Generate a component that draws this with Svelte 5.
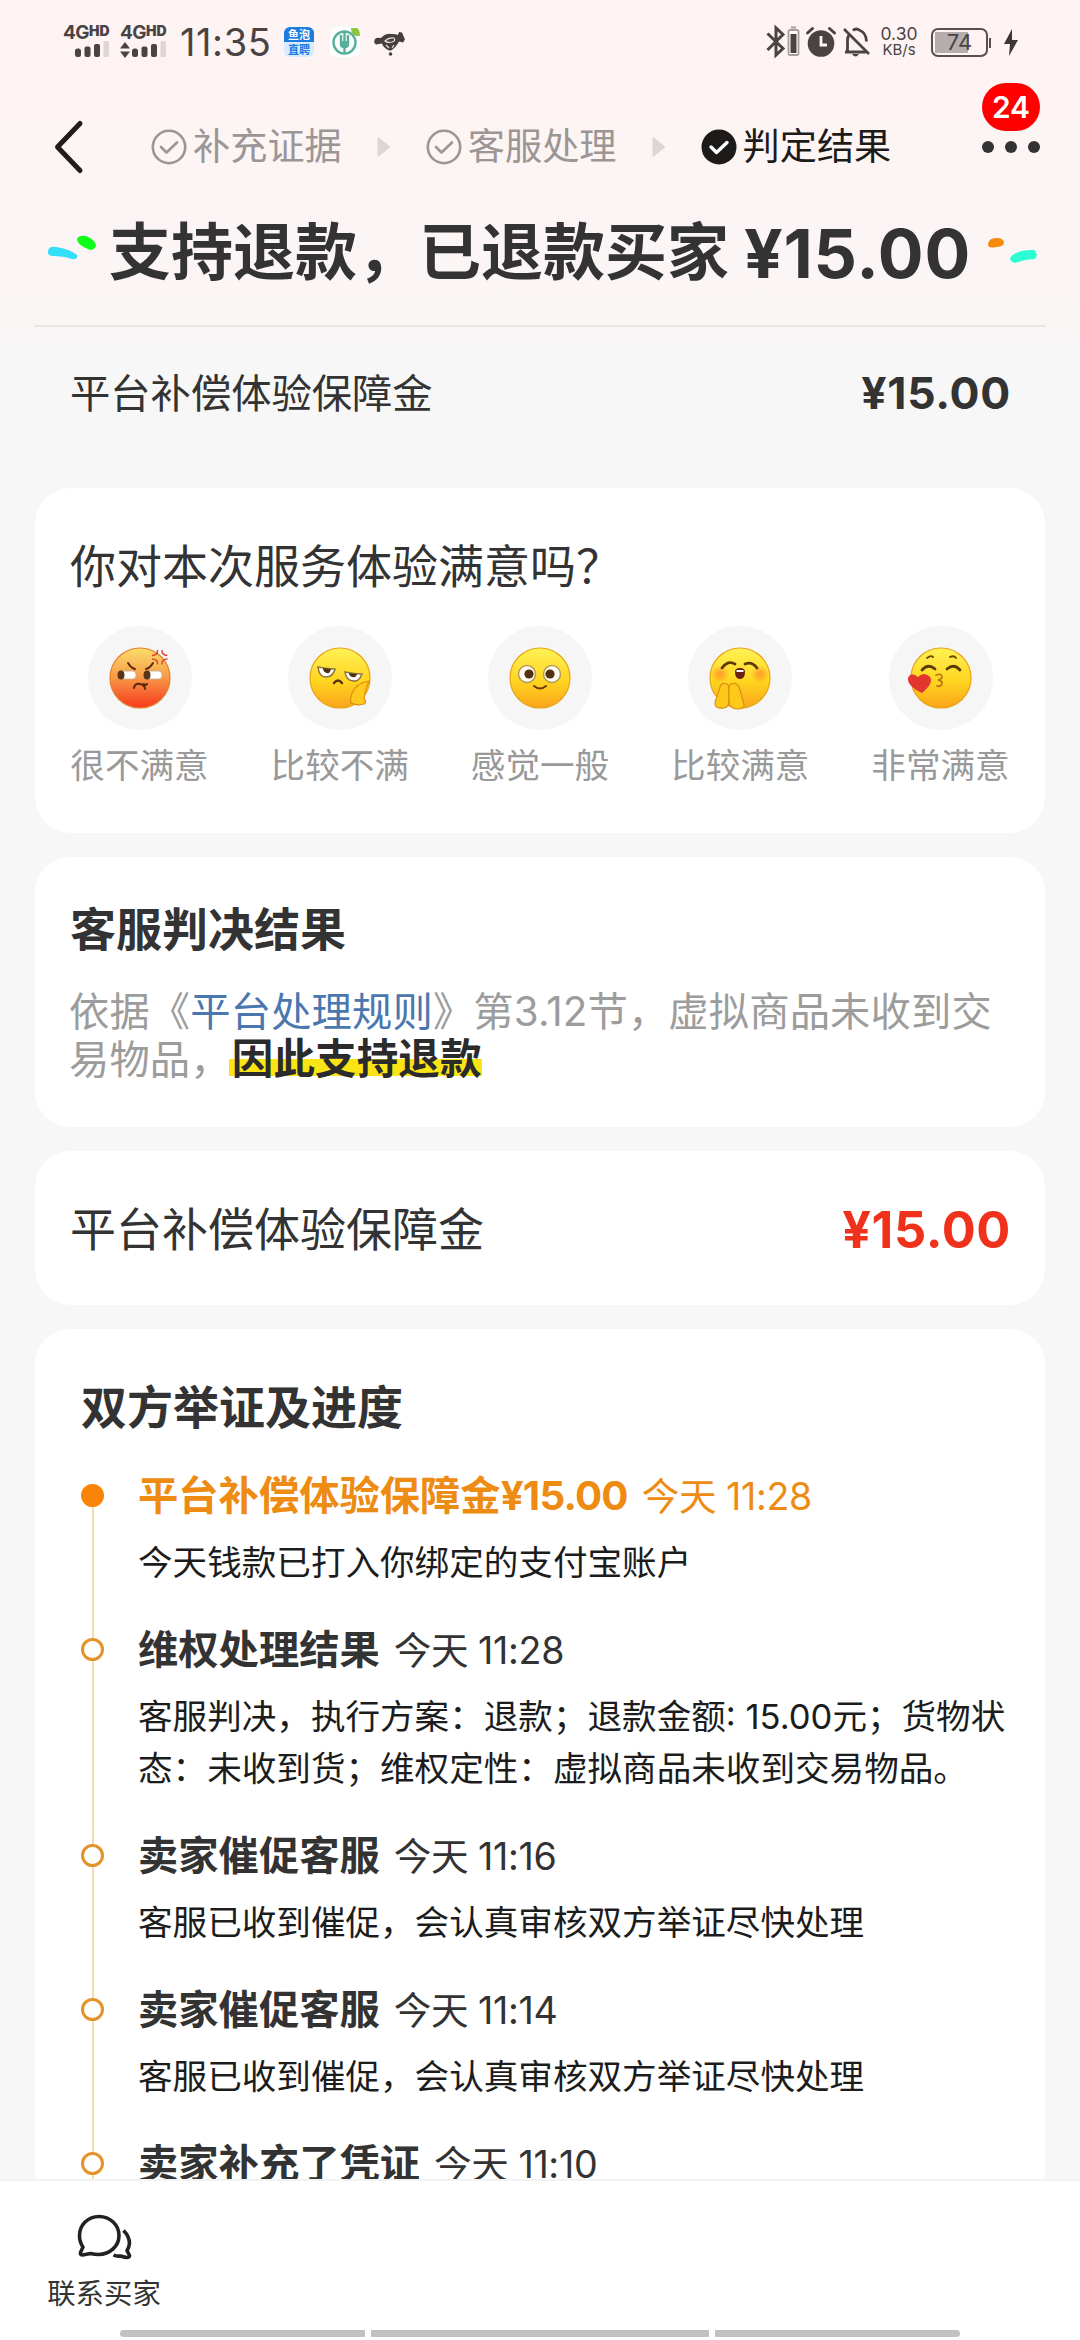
<script>
	const steps = [
		{ label: '补充证据', done: false },
		{ label: '客服处理', done: false },
		{ label: '判定结果', done: true }
	];

	const ratings = [
		{ mood: 'angry', label: '很不满意' },
		{ mood: 'bored', label: '比较不满' },
		{ mood: 'plain', label: '感觉一般' },
		{ mood: 'happy', label: '比较满意' },
		{ mood: 'kiss', label: '非常满意' }
	];

	const records = [
		{ title: '平台补偿体验保障金', amount: '¥15.00', time: '11:28', desc: '今天钱款已打入你绑定的支付宝账户' },
		{ title: '维权处理结果', time: '11:28', desc: '客服判决，执行方案：退款；退款金额: 15.00元；货物状态：未收到货；维权定性：虚拟商品未收到交易物品。' },
		{ title: '卖家催促客服', time: '11:16', desc: '客服已收到催促，会认真审核双方举证尽快处理' },
		{ title: '卖家催促客服', time: '11:14', desc: '客服已收到催促，会认真审核双方举证尽快处理' },
		{ title: '卖家补充了凭证', time: '11:10', desc: '' }
	];
</script>

{#snippet signal(arrows)}
	<div class="signal">
		<span class="net">4G<b>HD</b></span>
		<svg width="46" height="18" viewBox="0 0 46 18">
			{#if arrows}
				<path d="M0 7.500 5 1l5 6.500zM0 10.500 5 17l5-6.500z" fill="#4a4343" />
			{/if}
			<rect x="12" y="7.500" width="6" height="8.500" rx="2.500" fill="#4a4343" />
			<rect x="21.500" y="5.500" width="6" height="10.500" rx="2" fill="#4a4343" />
			<rect x="31" y="3" width="6" height="13" rx="2" fill="#4a4343" />
			<rect x="40.500" y="0" width="5.500" height="16" rx="1.500" fill="#dfd5d6" />
		</svg>
	</div>
{/snippet}

<div class="screen">
	<div class="status">
		{@render signal(false)}
		{@render signal(true)}
		<span class="clock">11:35</span>
		<div class="app-badge"><span>鱼泡</span><span>直聘</span></div>
		<svg class="bank" width="30" height="30" viewBox="0 0 30 30">
			<rect width="30" height="30" rx="6" fill="#fdfffe" />
			<circle cx="14.500" cy="15.500" r="11" fill="none" stroke="#58b09b" stroke-width="2.400" />
			<path d="M11 8v10M14.500 4v23M18 8v10" stroke="#58b09b" stroke-width="2.400" />
			<path d="M10 14h9v5l-2 2h-5l-2-2z" fill="#58b09b" />
			<path d="M21 1h6q3 2 3 8h-4q-5-2-5-8z" fill="#8cc63f" />
		</svg>
		<svg class="shake" width="31" height="24" viewBox="0 0 31 24">
			<path d="M1 7q2-2 6-1 5-5 10-4 4-.500 7 1l1-3 3 .500 3 7-2 3-4-1q-3 6-8 9h-2q-6-3-7-7l-6 1q-3-2-1-5.500z" fill="#453f3f" />
			<path d="M11 9q4-4 9-3 2 3-2 4-5 1-7-1zM12 13l3 3M20 13l-2 3" fill="none" stroke="#e9e0e0" stroke-width="1.200" />
			<circle cx="16.500" cy="22" r="1.800" fill="#453f3f" />
		</svg>

		<div class="status-right">
			<svg width="34" height="32" viewBox="0 0 34 32">
				<path d="M1.500 7.500 17 22.500 10 29V2l7 6.500L1.500 24" fill="none" stroke="#4a4343" stroke-width="3" />
				<path d="M25 1.500h5" stroke="#a59c9d" stroke-width="2" />
				<rect x="22.500" y="4" width="10" height="25" rx="1.500" fill="#fff" stroke="#a59c9d" stroke-width="1.800" />
				<rect x="24.500" y="8" width="6" height="19" fill="#4a4343" />
			</svg>
			<svg class="alarm" width="30" height="32" viewBox="0 0 30 32">
				<circle cx="15" cy="17.500" r="13.300" fill="#4a4343" />
				<path d="M1.500 7 6.500 2.500M28.500 7l-5-4.500" stroke="#4a4343" stroke-width="3" stroke-linecap="round" />
				<path d="M15 10v9h6" fill="none" stroke="#fff3f3" stroke-width="2.800" />
			</svg>
			<svg class="bell" width="28" height="32" viewBox="0 0 28 32">
				<path d="M4.500 25V14q0-3 2-6M10 4.500q3-3 7 0 6 2 6.500 11M2 26h21" fill="none" stroke="#4a4343" stroke-width="2.800" />
				<path d="M1 3 26 28" stroke="#4a4343" stroke-width="2.600" />
				<path d="M9 28h7q-3.500 5-7 0z" fill="#4a4343" />
			</svg>
			<div class="speed"><span>0.30</span><span>KB/s</span></div>
			<div class="battery"><span>74</span></div>
			<svg class="bolt" width="14" height="27" viewBox="0 0 14 27">
				<path d="M8 0 0 15h6L5 27l9-16H8z" fill="#3c3636" />
			</svg>
		</div>
	</div>

	<div class="nav">
		<svg class="back" width="30" height="54" viewBox="0 0 30 54">
			<path d="M26 3.500 3.500 27 26 50.500" fill="none" stroke="#221c1d" stroke-width="5" stroke-linecap="round" stroke-linejoin="round" />
		</svg>
		{#each steps as step, i}
			{#if i > 0}
				<svg class="arrow" width="13" height="20" viewBox="0 0 13 20">
					<path d="M1.500 1.500v17L12 10z" fill="#dcd6d6" stroke="#dcd6d6" stroke-width="2" stroke-linejoin="round" />
				</svg>
			{/if}
			<div class="step" class:done={step.done}>
				<svg width="36" height="36" viewBox="0 0 36 36">
					<circle cx="18" cy="18" r="16.200" />
					<path d="m10 18 5.500 5.500 10.500-10" />
				</svg>
				<span>{step.label}</span>
			</div>
		{/each}
		<div class="more">
			<i></i><i></i><i></i>
			<span class="count">24</span>
		</div>
	</div>

	<div class="headline">
		<svg width="50" height="30" viewBox="0 0 50 30">
			<path d="M1 13q1-5 8-4 14 2 21 8 1 5-5 4-8-3-20-3-5-1-4-5z" fill="#32def8" />
			<path d="M30 1q2-4 9-3 8 3 10 9-1 5-6 5-13-5-13-11z" fill="#0dff17" />
		</svg>
		<h1>支持退款，已退款买家 <span>¥15.00</span></h1>
		<svg width="50" height="30" viewBox="0 0 50 30">
			<path d="M0 6q1-6 8-6 8 0 8 5-1 4-8 4-8 2-8-3z" fill="#f58a0b" />
			<path d="M22 20q7-9 24-8 5 4 1 9l-10 1-10 3q-5-1-5-5z" fill="#2dfdd2" />
		</svg>
	</div>

	<div class="summary">
		<span>平台补偿体验保障金</span>
		<strong>¥15.00</strong>
	</div>

	<div class="cards">
		<section class="survey">
			<h2>你对本次服务体验满意吗？</h2>
			<div class="ratings">
				{#each ratings as rating}
					<div class="rating">
						<div class="face">
							<svg width="72" height="66" viewBox="-36 -33 72 66">
								<defs>
									<linearGradient id="g-{rating.mood}" x1="0" y1="0" x2="0" y2="1">
										{#if rating.mood === 'angry'}
											<stop offset="0" stop-color="#fbdd6c" />
											<stop offset=".45" stop-color="#f8a04a" />
											<stop offset="1" stop-color="#f6381c" />
										{:else}
											<stop offset="0" stop-color="#fff256" />
											<stop offset=".55" stop-color="#ffd51f" />
											<stop offset="1" stop-color="#fba41a" />
										{/if}
									</linearGradient>
									<radialGradient id="blush-{rating.mood}">
										<stop offset="0" stop-color="#ff6a2a" stop-opacity=".6" />
										<stop offset="1" stop-color="#ff6a2a" stop-opacity="0" />
									</radialGradient>
								</defs>
								<circle r="30" fill="url(#g-{rating.mood})" stroke={rating.mood === 'angry' ? '#e5802f' : '#e6a417'} stroke-width="1.200" />
								{#if rating.mood === 'angry'}
									<g fill="none" stroke="#5a2a0c" stroke-width="2" stroke-linecap="round">
										<path d="M-12-15q3 5 7 6M13-15q-3 5-7 6" />
										<path d="M-6 10q1-5 6-4t5 5M4 6q1 2 3 0" />
									</g>
									<rect x="-22" y="-7" width="18" height="8" rx="3.500" fill="#fff" stroke="#c9aa8c" stroke-width=".8" />
									<rect x="4" y="-7" width="18" height="8" rx="3.500" fill="#fff" stroke="#c9aa8c" stroke-width=".8" />
									<ellipse cx="-19" cy="-3" rx="3.500" ry="4.500" fill="#5a3417" />
									<ellipse cx="7" cy="-3" rx="3.500" ry="4.500" fill="#5a3417" />
									<path d="M17.500-28q.5 5-5.500 5.500M22-28q-.5 5 5.500 5.500M12-19q6 0 5.500 5.500M27.500-19q-6 0-5.500 5.500" fill="none" stroke="#df4838" stroke-width="1.500" />
								{:else if rating.mood === 'bored'}
									<path d="M-22-11q9 2 17 2-2 8-9 8t-8-10z" fill="#fff" stroke="#8f7440" stroke-width="1.500" />
									<path d="M5-6q9 2 17 2-3 8-9 7-7-1-8-9z" fill="#fff" stroke="#8f7440" stroke-width="1.500" />
									<path d="M-17-10 -9-9q-1 5-4.500 4T-17-10zM9-5l8 1q-1 4-4.500 3T9-5z" fill="#4f3210" />
									<path d="M-6 5q4-5 8 0" fill="none" stroke="#5a3408" stroke-width="2.400" stroke-linecap="round" />
									<path d="M29 3Q16 5 12 15q-2 6-1 10 7 3 13 1 3-2 0-6 1-8 5-17z" fill="#ffca1c" stroke="#e28c0e" stroke-width="1.200" />
								{:else if rating.mood === 'plain'}
									<circle cx="-13" cy="-4" r="8.500" fill="#fffdf2" stroke="#b59b53" stroke-width="1.500" />
									<circle cx="12" cy="-4" r="8.500" fill="#fffdf2" stroke="#b59b53" stroke-width="1.500" />
									<circle cx="-11" cy="-4" r="4.600" fill="#55300e" />
									<circle cx="10" cy="-4" r="4.600" fill="#55300e" />
									<path d="M-6 8q6 5 12 0" fill="none" stroke="#6b3b08" stroke-width="2" stroke-linecap="round" />
								{:else if rating.mood === 'happy'}
									<circle cx="-20" cy="-4" r="9" fill="url(#blush-happy)" />
									<circle cx="20" cy="-4" r="9" fill="url(#blush-happy)" />
									<path d="M-18-10q6-8 13-4M5-14q7-3 12 4" fill="none" stroke="#5c3a05" stroke-width="2.800" stroke-linecap="round" />
									<path d="M-5-6q0-4 5-4t5 4q0 7-5 7t-5-7z" fill="#6b1f14" />
									<path d="M-3.500-8h7v2h-7z" fill="#fff" />
									<path d="M-25 26q0-4 2-7l3-10q1-4 5-3.500t4 4.500v13q0 6-5 7-9 1-9-4z" fill="#ffc91a" stroke="#d99112" stroke-width="1.200" />
									<path d="M-11 10q0-4 4-4.500t6 3.500l3 10 2 8q0 4-6 4-8 0-9-7z" fill="#ffc91a" stroke="#d99112" stroke-width="1.200" />
								{:else}
									<path d="M-14-20q4-3 6-1M9-21q4-2 6 1" fill="none" stroke="#6b4505" stroke-width="1.800" stroke-linecap="round" />
									<path d="M-19-8q6-7 13-1M6-9q7-6 13 1" fill="none" stroke="#5c3a05" stroke-width="2.800" stroke-linecap="round" />
									<path d="M-5-3q6-2 6 2 0 2-4 3 5 1 4 4-1 3-5 2" fill="none" stroke="#b97a10" stroke-width="1.800" stroke-linecap="round" />
									<path d="M-19 15q-15-7-14-15 3-7 10-1 6-6 12 0 4 6-8 16z" fill="#e3362f" />
								{/if}
							</svg>
						</div>
						<span>{rating.label}</span>
					</div>
				{/each}
			</div>
		</section>

		<section class="verdict">
			<h2>客服判决结果</h2>
			<p>依据《<a href="#rules">平台处理规则</a>》第3.12节，虚拟商品未收到交易物品，<mark>因此支持退款</mark></p>
		</section>

		<section class="payout">
			<span>平台补偿体验保障金</span>
			<strong>¥15.00</strong>
		</section>

		<section class="progress">
			<h2>双方举证及进度</h2>
			<ul>
				{#each records as record, i}
					<li class:current={i === 0}>
						<div class="rail"><i></i></div>
						<div class="record">
							<h3>{record.title}{#if record.amount}<em>{record.amount}</em>{/if}<time>今天 {record.time}</time></h3>
							<p>{record.desc}</p>
						</div>
					</li>
				{/each}
			</ul>
		</section>
	</div>

	<footer>
		<div class="contact">
			<svg width="56" height="44" viewBox="0 0 56 44">
				<path d="M7 33 4.500 38.500q-.5 2.500 2 2.500l8-1.500q4 1 8 1C34 40.500 43 32 43 21.500S34 2.500 23 2.500 3.500 11 3.500 21.500q0 7 3.500 11.500z" fill="none" stroke="#222" stroke-width="3.600" stroke-linejoin="round" />
				<path d="M47.500 16.500q6 6 6 13-.5 4-2.500 7l2.500 5q0 2-3 2-3-.5-6-1.500-4 .5-7-1" fill="none" stroke="#222" stroke-width="3.600" stroke-linejoin="round" />
			</svg>
			<span>联系买家</span>
		</div>
		<div class="gesture"><i></i><i></i><i></i></div>
	</footer>
</div>

<style>
	:global(body) {
		margin: 0;
	}

	.screen {
		width: 1080px;
		height: 2340px;
		overflow: hidden;
		display: flex;
		flex-direction: column;
		color: #333;
		background: linear-gradient(#fff3f3, #fdf4f4 150px, #fbf5f5 290px, #f7f7f7 370px);
		font-family: Inter, "Noto Sans CJK SC", sans-serif;
	}

	h1, h2, h3, p, ul {
		margin: 0;
		padding: 0;
		font-weight: normal;
	}

	svg {
		display: block;
		flex: none;
		overflow: visible;
	}

	/* status bar */
	.status {
		display: flex;
		align-items: center;
		height: 84px;
		padding: 0 62px 0 63px;
		color: #4a4343;
		box-sizing: border-box;
	}

	.signal {
		width: 47px;
		margin-right: 10px;
	}

	.signal svg {
		margin-top: 1px;
	}

	.net {
		display: flex;
		height: 15px;
		font: bold 19px/15px Inter, sans-serif;
		letter-spacing: -0.5px;
	}

	.net b {
		font-size: 14px;
		line-height: 11px;
		letter-spacing: 0;
	}

	.clock {
		width: 97px;
		margin-left: 3px;
		font-size: 38px;
		letter-spacing: 0.6px;
	}

	.app-badge {
		width: 30px;
		height: 30px;
		margin-left: 7px;
		border-radius: 6px;
		overflow: hidden;
		background: #d8ecff;
		color: #1d7ce0;
		font: bold 11px/15px "Noto Sans CJK SC", sans-serif;
		text-align: center;
	}

	.app-badge span {
		display: block;
	}

	.app-badge span:first-child {
		background: #1d7ce0;
		color: #fff;
	}

	.bank {
		margin-left: 16px;
	}

	.shake {
		margin-left: 14px;
		margin-top: 3px;
	}

	.status-right {
		display: flex;
		align-items: center;
		margin-left: auto;
	}

	.alarm {
		margin-left: 6px;
	}

	.bell {
		margin-left: 7px;
	}

	.speed {
		width: 38px;
		margin-left: 9px;
		font-size: 17.5px;
		line-height: 16px;
		text-align: center;
	}

	.speed span {
		display: block;
	}

	.speed span:last-child {
		font-size: 15px;
	}

	.battery {
		position: relative;
		width: 53px;
		height: 25px;
		margin-left: 13px;
		border: 2.5px solid #5a5051;
		border-radius: 7px;
		background: linear-gradient(90deg, #b5adae 67%, transparent 67%) 2px 2px / 49px 21px no-repeat;
		font-size: 22px;
		line-height: 25px;
		text-align: center;
	}

	.battery::after {
		content: "";
		position: absolute;
		right: -5px;
		top: 8px;
		width: 2px;
		height: 10px;
		background: #5a5051;
	}

	.bolt {
		margin-left: 16px;
	}

	/* steps */
	.nav {
		display: flex;
		align-items: center;
		height: 126px;
		padding: 0 40px 0 54px;
		box-sizing: border-box;
	}

	.back {
		margin-right: 67px;
	}

	.step {
		display: flex;
		align-items: center;
		gap: 6px;
		color: #9b9696;
		font-size: 37.2px;
		line-height: 40px;
	}

	.step svg {
		fill: none;
		stroke: #9b9696;
		stroke-width: 2.6;
		stroke-linecap: round;
		stroke-linejoin: round;
	}

	.done {
		color: #1d1a1a;
	}

	.done circle {
		fill: #1d1a1a;
		stroke: #1d1a1a;
	}

	.done path {
		stroke: #fff;
		stroke-width: 3.4;
	}

	.arrow {
		margin: 0 36px 0 35px;
	}

	.more {
		position: relative;
		display: flex;
		gap: 11px;
		margin-left: auto;
	}

	.more i {
		width: 12px;
		height: 12px;
		border-radius: 50%;
		background: #333;
	}

	.count {
		position: absolute;
		left: 0;
		top: -58px;
		width: 58px;
		height: 48px;
		border-radius: 24px;
		background: #fe0000;
		color: #fff;
		font: 600 30px/49px Inter, sans-serif;
		text-align: center;
	}

	/* headline */
	.headline {
		display: flex;
		align-items: center;
		justify-content: space-between;
		height: 117px;
		margin: 0 34px;
		padding: 0 8px 29px 13px;
		border-bottom: 2px solid #e9e6e6;
		box-sizing: border-box;
	}

	h1 {
		display: flex;
		align-items: center;
		margin-left: -5px;
		font-size: 62px;
		font-weight: 700;
		line-height: 80px;
		white-space: nowrap;
	}

	h1 span {
		margin-left: 15px;
		font-size: 68px;
		letter-spacing: 0.8px;
	}

	.summary {
		display: flex;
		justify-content: space-between;
		align-items: center;
		height: 131px;
		padding: 0 70px;
		font-size: 40.3px;
	}

	.summary span,
	.payout span {
		margin-top: -5px;
	}

	.summary strong {
		margin-right: -1px;
		font-size: 44.5px;
		letter-spacing: 0.7px;
	}

	/* cards */
	.cards {
		flex: 1;
		min-height: 0;
		overflow: hidden;
		display: flex;
		flex-direction: column;
		gap: 24px;
		padding: 30px 35px 0;
	}

	section {
		flex: none;
		padding: 0 35px;
		border-radius: 36px;
		background: #fff;
		box-sizing: border-box;
	}

	h2 {
		font-size: 46px;
		line-height: 60px;
		font-weight: 700;
	}

	.survey {
		height: 345px;
		padding-top: 48px;
	}

	.survey h2 {
		font-weight: 400;
	}

	.ratings {
		display: flex;
		justify-content: space-between;
		margin-top: 30px;
	}

	.rating {
		width: 139px;
		color: #999;
		font-size: 34.6px;
		line-height: 44px;
		text-align: center;
	}

	.rating span {
		white-space: nowrap;
	}

	.face {
		display: flex;
		align-items: center;
		justify-content: center;
		width: 104px;
		height: 104px;
		margin: 0 auto 13px;
		border-radius: 50%;
		background: #f6f6f6;
	}

	.verdict {
		height: 270px;
		padding-top: 42px;
	}

	.verdict p {
		margin: 29px -5px 0 -1px;
		color: #9c9c9c;
		font-size: 40.3px;
		line-height: 47.5px;
		letter-spacing: 0.14px;
	}

	.verdict a {
		color: #4a77ad;
		text-decoration: none;
	}

	mark {
		margin-left: -2px;
		padding-left: 3px;
		color: #2b2b2b;
		font-size: 41.5px;
		font-weight: 700;
		line-height: 40px;
		background: linear-gradient(#fbe416, #fbe416) 0 76% / 100% 17px no-repeat;
	}

	.payout {
		display: flex;
		align-items: center;
		justify-content: space-between;
		height: 154px;
		font-size: 46px;
	}

	.payout strong {
		margin: 2px -1px 0 0;
		color: #f0321c;
		font-size: 50.5px;
		letter-spacing: 0.6px;
	}

	.progress {
		height: 1000px;
		padding: 48px 30px 0 46px;
	}

	ul {
		margin-top: 32px;
		list-style: none;
	}

	li {
		display: flex;
		gap: 34px;
	}

	.rail {
		flex: none;
		width: 23px;
		padding-top: 15px;
		background: linear-gradient(#f6d9b0, #f6d9b0) center / 2px 100% no-repeat;
	}

	li:first-child .rail {
		background-position: center 27px;
	}

	.rail i {
		display: block;
		width: 23px;
		height: 23px;
		border: 3px solid #e3932a;
		border-radius: 50%;
		background: #fff;
		box-sizing: border-box;
	}

	.current .rail i {
		border-color: #f98407;
		background: #f98407;
	}

	.record {
		padding-bottom: 34.5px;
	}

	h3 {
		height: 54px;
		font-size: 40.3px;
		line-height: 54px;
		font-weight: 700;
		white-space: nowrap;
	}

	em {
		font-style: normal;
		letter-spacing: -0.8px;
	}

	time {
		margin-left: 14px;
		font-size: 37.6px;
		font-weight: 400;
		letter-spacing: -0.3px;
		word-spacing: -0.5px;
	}

	.current h3 {
		color: #ee8b13;
	}

	.record p {
		margin-top: 14px;
		color: #1c1c1c;
		font-size: 34.6px;
		line-height: 51.5px;
	}

	/* bottom bar */
	footer {
		flex: none;
		display: flex;
		flex-direction: column;
		justify-content: space-between;
		height: 161px;
		padding: 33px 0 3px;
		border-top: 2px solid #f3f3f3;
		background: #fff;
		box-sizing: border-box;
	}

	.contact {
		display: flex;
		flex-direction: column;
		align-items: center;
		gap: 18px;
		width: 208px;
		font-size: 28.4px;
		line-height: 36px;
	}

	.gesture {
		display: flex;
		gap: 6px;
		padding: 0 120px;
	}

	.gesture i {
		flex: 245;
		height: 7px;
		background: #c1c1c1;
	}

	.gesture i:nth-child(2) {
		flex: 338;
	}

	.gesture i:first-child {
		border-radius: 4px 0 0 4px;
	}

	.gesture i:last-child {
		border-radius: 0 4px 4px 0;
	}
</style>
